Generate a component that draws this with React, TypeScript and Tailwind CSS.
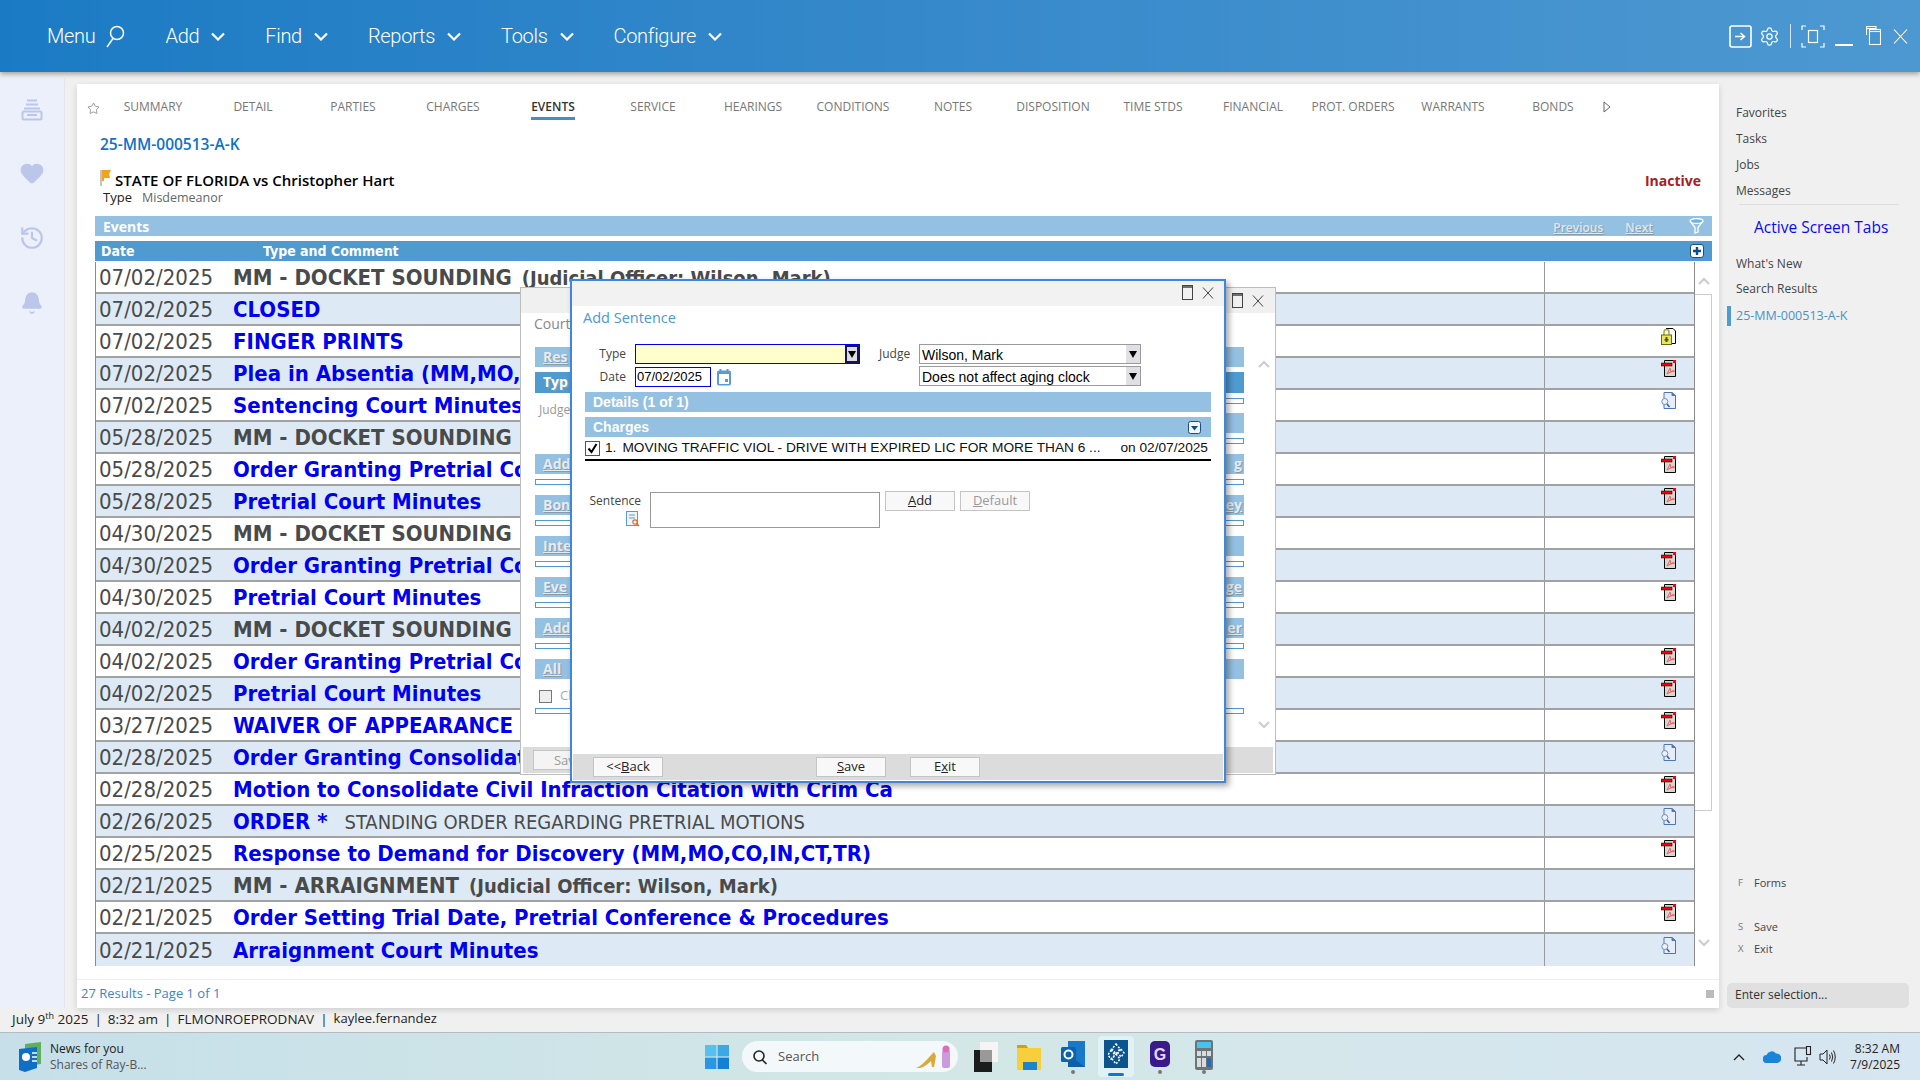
import React from "react";
import { Settings, Star, Heart, History, Bell } from "lucide-react";

type Icon = "pdf" | "lock" | "find" | null;
type Row = { d: string; t: string; blue: boolean; extra?: string; extraBold?: boolean; icon: Icon };

const rows: Row[] = [
  { d: "07/02/2025", t: "MM - DOCKET SOUNDING", blue: false, extra: "(Judicial Officer: Wilson, Mark)", extraBold: true, icon: null },
  { d: "07/02/2025", t: "CLOSED", blue: true, icon: null },
  { d: "07/02/2025", t: "FINGER PRINTS", blue: true, icon: "lock" },
  { d: "07/02/2025", t: "Plea in Absentia (MM,MO,CO,IN,CT,TR)", blue: true, icon: "pdf" },
  { d: "07/02/2025", t: "Sentencing Court Minutes", blue: true, icon: "find" },
  { d: "05/28/2025", t: "MM - DOCKET SOUNDING", blue: false, icon: null },
  { d: "05/28/2025", t: "Order Granting Pretrial Continuance", blue: true, icon: "pdf" },
  { d: "05/28/2025", t: "Pretrial Court Minutes", blue: true, icon: "pdf" },
  { d: "04/30/2025", t: "MM - DOCKET SOUNDING", blue: false, icon: null },
  { d: "04/30/2025", t: "Order Granting Pretrial Continuance", blue: true, icon: "pdf" },
  { d: "04/30/2025", t: "Pretrial Court Minutes", blue: true, icon: "pdf" },
  { d: "04/02/2025", t: "MM - DOCKET SOUNDING", blue: false, icon: null },
  { d: "04/02/2025", t: "Order Granting Pretrial Continuance", blue: true, icon: "pdf" },
  { d: "04/02/2025", t: "Pretrial Court Minutes", blue: true, icon: "pdf" },
  { d: "03/27/2025", t: "WAIVER OF APPEARANCE", blue: true, icon: "pdf" },
  { d: "02/28/2025", t: "Order Granting Consolidation", blue: true, icon: "find" },
  { d: "02/28/2025", t: "Motion to Consolidate Civil Infraction Citation with Crim Ca", blue: true, icon: "pdf" },
  { d: "02/26/2025", t: "ORDER *", blue: true, extra: "STANDING ORDER REGARDING PRETRIAL MOTIONS", icon: "find" },
  { d: "02/25/2025", t: "Response to Demand for Discovery (MM,MO,CO,IN,CT,TR)", blue: true, icon: "pdf" },
  { d: "02/21/2025", t: "MM - ARRAIGNMENT", blue: false, extra: "(Judicial Officer: Wilson, Mark)", extraBold: true, icon: null },
  { d: "02/21/2025", t: "Order Setting Trial Date, Pretrial Conference & Procedures", blue: true, icon: "pdf" },
  { d: "02/21/2025", t: "Arraignment Court Minutes", blue: true, icon: "find" },
];

const tabs = ["SUMMARY", "DETAIL", "PARTIES", "CHARGES", "EVENTS", "SERVICE", "HEARINGS", "CONDITIONS", "NOTES", "DISPOSITION", "TIME STDS", "FINANCIAL", "PROT. ORDERS", "WARRANTS", "BONDS"];

function Chev() {
  return (
    <svg width="14" height="9" viewBox="0 0 14 9" fill="none" stroke="#fff" strokeWidth="2.2">
      <path d="M1 1.5 L7 7.5 L13 1.5" />
    </svg>
  );
}

function NavItem({ label }: { label: string }) {
  return (
    <div className="flex items-center gap-[12px]">
      <span>{label}</span>
      <Chev />
    </div>
  );
}

function PdfIcon() {
  return (
    <svg width="15" height="17" viewBox="0 0 15 17" fill="none">
      <path d="M3.5 0.5 H14.5 V16.5 H3.5 Z" fill="#d9d4d4" stroke="#000" />
      <rect x="12" y="0" width="3" height="3" fill="#f00" />
      <rect x="0" y="3" width="11" height="3" fill="#f00" stroke="#000" strokeWidth="0.5" />
      <path d="M6 14 L9 8 L10 12 L14 11 M6 14 L13 10" stroke="#f0605a" strokeWidth="1" />
    </svg>
  );
}

function LockIcon() {
  return (
    <svg width="15" height="17" viewBox="0 0 15 17" fill="none">
      <path d="M5 0.5 H12 L14.5 3 V15.5 H10" fill="#fff" stroke="#000" />
      <path d="M3 7 V4 A2.5 2.5 0 0 1 8 4 V7" stroke="#a8a830" strokeWidth="1.5" />
      <rect x="0.5" y="7" width="10" height="9.5" fill="#e8e860" stroke="#6a6a10" />
      <rect x="4.5" y="9" width="2" height="5" fill="#55550a" />
      <rect x="3.5" y="11" width="4" height="1.5" fill="#55550a" />
    </svg>
  );
}

function FindIcon() {
  return (
    <svg width="15" height="17" viewBox="0 0 15 17" fill="none">
      <path d="M3 0.5 H11 L14.5 3.5 V16.5 H3 Z" fill="#e6ecf8" stroke="#4f76b4" />
      <path d="M11 0.5 V3.5 H14.5" fill="#4f76b4" stroke="#4f76b4" />
      <circle cx="3.8" cy="9.5" r="3" fill="#eef3fb" stroke="#6f8fc0" />
      <path d="M6 12 L8.5 15" stroke="#38609c" strokeWidth="1.5" />
    </svg>
  );
}

function DocIcon({ kind }: { kind: Icon }) {
  if (kind === "pdf") return <PdfIcon />;
  if (kind === "lock") return <LockIcon />;
  if (kind === "find") return <FindIcon />;
  return null;
}

function RestoreMini() {
  return (
    <svg width="11" height="15" viewBox="0 0 11 15" fill="none" stroke="#444">
      <rect x="0.5" y="0.5" width="10" height="14" />
      <path d="M0.5 2 H10.5" strokeWidth="1.5" />
    </svg>
  );
}

function CloseMini() {
  return (
    <svg width="12" height="12" viewBox="0 0 12 12" fill="none" stroke="#444">
      <path d="M1 0.5 L11 11.5 M11 0.5 L1 11.5" />
    </svg>
  );
}

function SelectArrow({ dark }: { dark?: boolean }) {
  return (
    <div className={dark ? "w-[14px] h-full bg-[#dcdce0] border-2 border-[#14145a] flex items-center justify-center" : "w-[14px] h-full bg-[#e0e0e4] flex items-center justify-center"}>
      <svg width="8" height="9" viewBox="0 0 8 9"><path d="M0 1 H8 L4 8 Z" fill="#000" /></svg>
    </div>
  );
}

function Band({ label, side, dark }: { label?: string; side: "l" | "r"; dark?: boolean }) {
  return (
    <div className={(dark ? "h-[21px] bg-[#4f9acf] text-white " : "h-[20px] bg-[#94c0e2] text-[#e4ecf2] underline ") + (side === "l" ? "pl-[8px] text-left " : "pr-[2px] text-right ") + "shrink-0 mb-[5px] text-[14px] font-bold leading-[20px] [text-shadow:1px_1px_0_#8a9aa8]"}>
      {label}
    </div>
  );
}

function Thin() {
  return <div className="shrink-0 h-[6px] border border-[#4f9acf] bg-white mb-[10px]" />;
}

function BackColumn({ side }: { side: "l" | "r" }) {
  const l = side === "l";
  return (
    <div className="flex-1 flex flex-col">
      <Band side={side} label={l ? "Res" : ""} />
      <Band side={side} label={l ? "Typ" : ""} dark />
      {l ? (
        <div className="h-[56px] shrink-0 pt-[3px] pl-[4px] text-[12px] text-[#999]">Judge</div>
      ) : (
        <>
          <Thin />
          <div className="-mt-[1px]"><Band side={side} /></div>
          <Thin />
        </>
      )}
      <Band side={side} label={l ? "Add" : "g"} />
      <Thin />
      <Band side={side} label={l ? "Bon" : "ey"} />
      <Thin />
      <Band side={side} label={l ? "Inter" : ""} />
      <Thin />
      <Band side={side} label={l ? "Eve" : "rge"} />
      <Thin />
      <Band side={side} label={l ? "Add" : "er"} />
      <Thin />
      <Band side={side} label={l ? "All" : ""} />
      <div className="h-[24px] shrink-0 flex items-center gap-[8px] pl-[4px] text-[13px] text-[#aaa]">
        {l && <div className="w-[13px] h-[13px] border border-[#777] bg-[#eee] shrink-0" />}
        {l && <span>Close</span>}
      </div>
      <Thin />
    </div>
  );
}

function Btn({ children, dim }: { children: React.ReactNode; dim?: boolean }) {
  return (
    <div className={(dim ? "text-[#999] " : "text-[#222] ") + "w-[70px] h-[20px] bg-[#f8f8f8] border border-[#c4c4c4] flex items-center justify-center text-[13px]"}>
      {children}
    </div>
  );
}

export default function App() {
  return (
    <div className="relative w-[1920px] h-[1080px] overflow-hidden flex flex-col bg-[#f0f0f0] font-['Open_Sans',sans-serif]">
      {/* Top bar */}
      <header className="h-[72px] shrink-0 flex items-center justify-between bg-gradient-to-r from-[#1a7bc4] to-[#4d98d1] text-white shadow-[0_2px_5px_rgba(0,0,0,0.35)] z-10">
        <nav className="flex items-center gap-[40px] pl-[47px] text-[20px] tracking-[-0.3px] font-['Roboto',sans-serif] font-light">
          <div className="flex items-center gap-[10px]">
            <span>Menu</span>
            <svg width="20" height="24" viewBox="0 0 20 24" fill="none" stroke="#fff" strokeWidth="1.5">
              <circle cx="12" cy="9" r="6.5" />
              <path d="M8 14.5 L2 23" />
            </svg>
          </div>
          <NavItem label="Add" />
          <NavItem label="Find" />
          <NavItem label="Reports" />
          <NavItem label="Tools" />
          <NavItem label="Configure" />
        </nav>
        <div className="flex items-center pr-[12px]">
          <svg width="23" height="23" viewBox="0 0 23 23" fill="none" stroke="#fff" strokeWidth="1.6">
            <rect x="1" y="1" width="21" height="21" rx="2" />
            <path d="M6 11.5 H15 M11.5 8 L15.5 11.5 L11.5 15" />
          </svg>
          <Settings size={21} strokeWidth={1.4} className="ml-[7px]" />
          <div className="w-px h-[24px] bg-[#d6e6f4] ml-[10px]" />
          <svg className="ml-[10px]" width="24" height="23" viewBox="0 0 24 23" fill="none" stroke="#fff" strokeWidth="1.2">
            <path d="M1 5 V1 H5 M19 1 H23 V5 M23 18 V22 H19 M5 22 H1 V18" />
            <rect x="7.5" y="5.5" width="9" height="12" />
          </svg>
          <div className="w-[18px] h-[2px] bg-white ml-[10px] mt-[17px]" />
          <svg className="ml-[13px] -mt-[2px]" width="15" height="19" viewBox="0 0 15 19" fill="none" stroke="#fff" strokeWidth="1.1">
            <path d="M0.5 9 V0.5 H10 V3" />
            <path d="M0.5 2.5 H10" />
            <rect x="3.5" y="3.5" width="11" height="15" fill="#4894cf" />
            <path d="M3.5 5.5 H14.5" />
          </svg>
          <svg className="ml-[12px]" width="15" height="15" viewBox="0 0 15 15" fill="none" stroke="#fff" strokeWidth="1.1">
            <path d="M1 0.5 L14 14.5 M14 0.5 L1 14.5" />
          </svg>
        </div>
      </header>

      {/* Middle */}
      <div className="h-[936px] shrink-0 flex">
        <aside className="w-[65px] h-[930px] mt-[6px] bg-[#ecf0fa] border-r border-[#e4e6ee] flex flex-col items-center text-[#bcc6ea]">
          <svg className="mt-[21px]" width="22" height="22" viewBox="0 0 22 22" fill="none" stroke="#bcc6ea" strokeWidth="2">
            <path d="M6 1.5 H16 M5 5.5 H17 M3 9.5 H19" />
            <rect x="1.5" y="12.5" width="19" height="8" rx="1.5" />
            <path d="M6 16 H16" />
          </svg>
          <Heart size={26} fill="#bcc6ea" strokeWidth={1} className="mt-[39px]" />
          <History size={26} strokeWidth={2} className="mt-[39px]" />
          <Bell size={24} fill="#bcc6ea" strokeWidth={1.5} className="mt-[40px]" />
        </aside>

        <main className="w-[1642px] h-[924px] mt-[12px] ml-[12px] bg-white shadow-[0_2px_6px_rgba(0,0,0,0.15)] flex flex-col">
          <div className="h-[38px] shrink-0 flex items-start pt-[14px] text-[12px] text-[#777]">
            <Star size={13} strokeWidth={1.2} className="ml-[10px] mr-[3px] mt-[4px] text-[#666]" />
            {tabs.map((t) => (
              <div key={t} className="w-[100px] shrink-0 flex justify-center">
                <span className={t === "EVENTS" ? "pb-[1px] border-b-[3px] border-[#3f8fd0] font-semibold text-[#333]" : ""}>{t}</span>
              </div>
            ))}
            <svg className="mt-[3px]" width="8" height="12" viewBox="0 0 8 12" fill="none" stroke="#666"><path d="M1 1 L7 6 L1 11 Z" /></svg>
          </div>

          <div className="h-[20px] mt-[12px] pl-[23px] text-[15.5px] leading-[20px] font-semibold text-[#0d72c8]">25-MM-000513-A-K</div>

          <div className="h-[18px] mt-[17px] mb-[1px] pl-[23px] flex items-center text-[15px] font-semibold text-black">
            <svg className="-mt-[5px] mr-[2px] shrink-0" width="13" height="16" viewBox="0 0 13 16">
              <path d="M1 0 V16" stroke="#888" strokeWidth="1" />
              <path d="M2 0 H11 L9 4 L10 8 H4 V11 H2 Z" fill="#f4a11e" />
            </svg>
            STATE OF FLORIDA vs Christopher Hart
            <span className="ml-auto mr-[18px] text-[14px] font-bold text-[#a52024]">Inactive</span>
          </div>
          <div className="h-[16px] pl-[26px] flex items-center text-[13px]">
            <span className="text-[#222] w-[39px]">Type</span>
            <span className="text-[#666] text-[12.5px]">Misdemeanor</span>
          </div>

          <div className="w-[1617px] h-[20px] mt-[10px] ml-[18px] bg-[#94c0e2] flex items-center text-[14px] font-bold text-white pl-[8px] shrink-0">
            Events
            <span className="ml-auto text-[12px] mt-[3px] underline font-semibold text-[#dfe8ef] [text-shadow:1px_1px_0_#8a9aa8]">Previous</span>
            <span className="ml-[22px] text-[12px] mt-[3px] underline font-semibold text-[#dfe8ef] [text-shadow:1px_1px_0_#8a9aa8]">Next</span>
            <svg className="ml-[36px] mr-[8px]" width="15" height="16" viewBox="0 0 15 16" fill="none" stroke="#fff" strokeWidth="1.3">
              <ellipse cx="7.5" cy="3" rx="6.5" ry="2.4" fill="#6fb0e6" />
              <path d="M1 3 L6 9.5 V15 L9 14 V9.5 L14 3" />
            </svg>
          </div>

          <div className="w-[1617px] h-[20px] mt-[5px] ml-[18px] bg-[#4f9acf] flex items-center text-[14px] font-bold text-white font-['DejaVu_Sans_Condensed','DejaVu_Sans',sans-serif] shrink-0">
            <span className="pl-[6px] w-[168px]">Date</span>
            <span>Type and Comment</span>
            <svg className="ml-auto mr-[8px]" width="14" height="14" viewBox="0 0 14 14">
              <rect x="0.5" y="0.5" width="13" height="13" rx="2.5" fill="#fff" stroke="#1b4f80" />
              <path d="M3 7 H11 M7 3 V11" stroke="#0e4c86" strokeWidth="2.4" />
            </svg>
          </div>

          <div className="flex mt-[1px] ml-[18px] w-[1617px]">
            <div className="w-[1600px] border-l border-[#8c8c8c] border-r">
              {rows.map((r, i) => (
                <div key={i} className={(i % 2 ? "bg-[#ddeaf5] " : "bg-white ") + (i === rows.length - 1 ? "" : "border-b-2 border-[#a2a2a2] ") + "h-[32px] pt-[2px] flex items-center overflow-hidden font-['DejaVu_Sans_Condensed','DejaVu_Sans',sans-serif] text-[22px] leading-[30px]"}>
                  <span className="w-[137px] pl-[3px] shrink-0 text-[#4a4a4a]">{r.d}</span>
                  <span className={(r.extraBold ? "gap-[10px] " : "gap-[17px] ") + "w-[1311px] shrink-0 flex items-center whitespace-nowrap"}>
                    <span className={(r.blue ? "text-[#0000f0]" : "text-[#4a4a4a]") + " font-bold"}>{r.t}</span>
                    {r.extra && (
                      <span className={(r.extraBold ? "font-bold text-[20px] " : "text-[20px] ") + "text-[#4a4a4a]"}>{r.extra}</span>
                    )}
                  </span>
                  <span className="flex-1 h-[36px] border-l border-[#9a9a9a] pl-[116px] pt-[4px]">
                    <DocIcon kind={r.icon} />
                  </span>
                </div>
              ))}
            </div>
            <div className="w-[17px] flex flex-col items-center">
              <div className="h-[32px] pt-[15px]">
                <svg width="12" height="8" viewBox="0 0 12 8" fill="none" stroke="#ccc" strokeWidth="2"><path d="M1 7 L6 2 L11 7" /></svg>
              </div>
              <div className="w-[17px] h-[517px] border border-l-0 border-[#ccc]" />
              <div className="mt-[128px]">
                <svg width="12" height="8" viewBox="0 0 12 8" fill="none" stroke="#ccc" strokeWidth="2"><path d="M1 1 L6 6 L11 1" /></svg>
              </div>
            </div>
          </div>

          <div className="mt-auto h-[29px] border-t border-[#eee] flex items-center pl-[4px] pr-[5px] text-[13px] text-[#3f83c4]">
            27 Results - Page 1 of 1
            <div className="ml-auto w-[8px] h-[8px] bg-[#bbb]" />
          </div>
        </main>

        <aside className="w-[201px] flex flex-col text-[12px] text-[#444] pl-[17px] pt-[32px]">
          <div className="h-[26px] leading-[18px]">Favorites</div>
          <div className="h-[26px] leading-[18px]">Tasks</div>
          <div className="h-[26px] leading-[18px]">Jobs</div>
          <div className="h-[18px] leading-[18px]">Messages</div>
          <div className="w-[160px] h-[1px] bg-[#ddd] ml-[3px] mt-[4px]" />
          <div className="text-[15.5px] text-[#0a0af0] pl-[18px] h-[46px] pt-[10px] leading-[24px]">Active Screen Tabs</div>
          <div className="h-[26px] leading-[18px] mt-[4px]">What's New</div>
          <div className="h-[26px] leading-[18px]">Search Results</div>
          <div className="h-[20px] flex items-center -ml-[9px] text-[12.5px] text-[#4a90c8]">
            <div className="w-[4px] h-[20px] bg-[#4f9acf] mr-[5px]" />
            25-MM-000513-A-K
          </div>
          <div className="mt-[548px] flex items-center h-[18px] text-[11px]"><span className="w-[16px] ml-[2px] text-[9.5px] text-[#777]">F</span>Forms</div>
          <div className="mt-[26px] flex items-center h-[18px] text-[11px]"><span className="w-[16px] ml-[2px] text-[9.5px] text-[#777]">S</span>Save</div>
          <div className="mt-[4px] flex items-center h-[18px] text-[11px]"><span className="w-[16px] ml-[2px] text-[9.5px] text-[#777]">X</span>Exit</div>
          <div className="mt-[25px] -ml-[9px] w-[182px] h-[25px] rounded-[5px] bg-[#e0e0e0] flex items-center pl-[8px] pb-[1px] text-[12px] text-[#333]">Enter selection...</div>
        </aside>
      </div>

      {/* Status */}
      <div className="h-[24px] shrink-0 pl-[12px] pb-[2px] flex items-center gap-[6px] text-[13.5px] text-[#222]">
        <span>July 9<sup className="text-[9px]">th</sup> 2025</span><span>|</span>
        <span>8:32 am</span><span>|</span>
        <span>FLMONROEPRODNAV</span><span>|</span>
        <span className="text-[13px]">kaylee.fernandez</span>
      </div>

      {/* Taskbar */}
      <footer className="h-[48px] shrink-0 border-t border-[#b4bcc2] bg-gradient-to-r from-[#c6dfe9] via-[#d3e7e6] to-[#d6e6f2] flex items-center text-[#222]">
        <svg className="ml-[17px]" width="26" height="30" viewBox="0 0 26 30">
          <path d="M8 2 L24 0 V22 L8 24 Z" fill="#5fb058" />
          <path d="M2 7 L20 5 V26 L8 30 L2 28 Z" fill="#0f6fc6" />
          <circle cx="9" cy="15" r="4" fill="#fff" />
          <path d="M15 11 H20 M15 15 H20 M15 19 H20" stroke="#fff" strokeWidth="1.5" />
        </svg>
        <div className="ml-[7px] w-[120px] flex flex-col">
          <span className="text-[12px] leading-[16px]">News for you</span>
          <span className="text-[12px] leading-[16px] text-[#555]">Shares of Ray-B...</span>
        </div>
        <svg className="ml-[535px]" width="24" height="24" viewBox="0 0 24 24">
          <rect x="0" y="0" width="11.4" height="11.4" fill="#58c0f0" />
          <rect x="12.6" y="0" width="11.4" height="11.4" fill="#3ba8e8" />
          <rect x="0" y="12.6" width="11.4" height="11.4" fill="#2a98e0" />
          <rect x="12.6" y="12.6" width="11.4" height="11.4" fill="#1280d4" />
        </svg>
        <div className="ml-[13px] w-[216px] h-[31px] rounded-full bg-[#f3f8fa] flex items-center pl-[10px] text-[13px] text-[#555]">
          <svg width="16" height="16" viewBox="0 0 16 16" fill="none" stroke="#222" strokeWidth="1.6">
            <circle cx="7" cy="7" r="5" />
            <path d="M10.5 11 L14.5 15" />
          </svg>
          <span className="ml-[10px]">Search</span>
          <svg className="ml-auto mr-[6px]" width="38" height="26" viewBox="0 0 38 26">
            <path d="M2 24 C8 22 14 14 20 8 L22 12 L20 23 H18 L17 17 C14 20 10 23 6 24 Z" fill="#d9a93c" />
            <rect x="28" y="6" width="8" height="18" rx="2" fill="#c99ae0" />
            <circle cx="32" cy="5" r="3.5" fill="#d86fb8" />
          </svg>
        </div>
        <svg className="ml-[15px]" width="26" height="30" viewBox="0 0 26 30">
          <rect x="7" y="0" width="18" height="20" fill="#f5f5f5" />
          <rect x="1" y="8" width="18" height="22" fill="#1c1c1c" />
          <rect x="7" y="8" width="12" height="12" fill="#999" />
        </svg>
        <svg className="ml-[17px]" width="26" height="28" viewBox="0 0 26 28">
          <path d="M1 2 H10 L12 5 H25 V27 H1 Z" fill="#f6cf3a" />
          <path d="M1 2 H10 L12 5 H1 Z" fill="#d99a14" />
          <rect x="7" y="19" width="14" height="8" fill="#1c84cc" />
        </svg>
        <div className="ml-[18px] relative w-[26px] h-[34px]">
          <svg width="26" height="28" viewBox="0 0 26 28">
            <rect x="8" y="1" width="17" height="26" fill="#1a78c8" />
            <path d="M8 14 L25 27 H8 Z" fill="#0f5ea8" />
            <rect x="1" y="7" width="15" height="15" rx="1.5" fill="#0a63b0" />
            <circle cx="8.5" cy="14.5" r="4" fill="none" stroke="#fff" strokeWidth="2" />
          </svg>
          <div className="absolute left-[11px] bottom-0 w-[4px] h-[4px] rounded-full bg-[#777]" />
        </div>
        <div className="ml-[11px] w-[38px] h-[43px] rounded-[4px] bg-[#e2f2f4] border border-[#cfe6ea] flex flex-col items-center pt-[4px] relative">
          <svg width="24" height="28" viewBox="0 0 24 28">
            <rect width="24" height="28" fill="#0a5590" />
            <path d="M12 4 L16 9 L12 14 L8 9 Z M12 14 L16 19 L12 24 L8 19 Z M7 10 L11 15 L7 19 L4 15 Z M17 9 L20 13 L17 17 L14 13 Z" fill="none" stroke="#fff" strokeWidth="1.5" strokeDasharray="2 1.5" />
          </svg>
          <div className="absolute bottom-[1px] w-[16px] h-[3px] rounded bg-[#0a78d4]" />
        </div>
        <div className="ml-[14px] relative w-[22px] h-[34px] flex justify-center">
          <svg width="22" height="28" viewBox="0 0 22 28">
            <rect x="1" y="1" width="20" height="26" rx="5" fill="#3a1a8a" />
            <text x="11" y="20" textAnchor="middle" fontSize="16" fontWeight="700" fill="#e8d8ff" fontFamily="Liberation Sans">G</text>
          </svg>
          <div className="absolute left-[9px] bottom-0 w-[4px] h-[4px] rounded-full bg-[#777]" />
        </div>
        <div className="ml-[24px] relative w-[18px] h-[34px] flex justify-center">
          <svg width="18" height="30" viewBox="0 0 18 30">
            <rect width="18" height="30" rx="2" fill="#6e7378" />
            <rect x="2" y="2" width="14" height="6" fill="#45c4ee" />
            <rect x="2" y="11" width="4" height="5" fill="#d8dcdf" />
            <rect x="7" y="11" width="4" height="5" fill="#d8dcdf" />
            <rect x="12" y="11" width="4" height="5" fill="#d8dcdf" />
            <rect x="2" y="18" width="4" height="9" fill="#d8dcdf" />
            <rect x="7" y="18" width="4" height="9" fill="#d8dcdf" />
            <rect x="12" y="18" width="4" height="9" fill="#2c68b0" />
          </svg>
          <div className="absolute left-[7px] bottom-0 w-[4px] h-[4px] rounded-full bg-[#777]" />
        </div>
        <svg className="ml-[520px]" width="12" height="8" viewBox="0 0 12 8" fill="none" stroke="#222" strokeWidth="1.4"><path d="M1 7 L6 2 L11 7" /></svg>
        <svg className="ml-[18px]" width="18" height="13" viewBox="0 0 18 13"><path d="M4 13 A4 4 0 0 1 3.5 5 A5.5 5.5 0 0 1 13 3.5 A4.5 4.5 0 0 1 14 13 Z" fill="#1a84d8" /></svg>
        <svg className="ml-[13px]" width="20" height="22" viewBox="0 0 20 22" fill="none" stroke="#222" strokeWidth="1.1">
          <path d="M12 2 H1 V15 H13 V11" />
          <path d="M7 15 V19 M3 19 H11" />
          <rect x="12.5" y="0.5" width="4" height="8" />
        </svg>
        <svg className="ml-[5px]" width="18" height="18" viewBox="0 0 18 18" fill="none" stroke="#222" strokeWidth="1">
          <path d="M1 6 H4 L8 2 V16 L4 12 H1 Z M10.5 6.5 Q12 9 10.5 11.5 M12.5 4.5 Q15 9 12.5 13.5 M14.5 2.5 Q18 9 14.5 15.5" />
        </svg>
        <div className="ml-[11px] w-[52px] flex flex-col items-end text-[12px] leading-[16px] text-[#222]">
          <span>8:32 AM</span>
          <span>7/9/2025</span>
        </div>
      </footer>

      {/* Back dialog */}
      <div className="absolute left-[520px] top-[287px] w-[756px] h-[488px] bg-white border border-[#bdbdbd] flex flex-col">
        <div className="h-[25px] bg-[#f0f0f0] flex items-center justify-end gap-[9px] pr-[11px] shrink-0">
          <RestoreMini />
          <CloseMini />
        </div>
        <div className="pl-[13px] h-[34px] text-[14px] text-[#888] shrink-0">Court</div>
        <div className="flex pl-[14px] pr-[31px] gap-[20px] h-[380px] shrink-0">
          <BackColumn side="l" />
          <BackColumn side="r" />
        </div>
        <div className="absolute right-[5px] top-[72px]"><svg width="12" height="8" viewBox="0 0 12 8" fill="none" stroke="#ccc" strokeWidth="2"><path d="M1 7 L6 2 L11 7" /></svg></div>
        <div className="absolute right-[5px] top-[433px]"><svg width="12" height="8" viewBox="0 0 12 8" fill="none" stroke="#ccc" strokeWidth="2"><path d="M1 1 L6 6 L11 1" /></svg></div>
        <div className="mt-auto h-[26px] mb-[1px] mx-[2px] bg-[#dcdcdc] flex items-center pl-[10px]">
          <div className="w-[70px] h-[20px] border border-[#c4c4c4] bg-[#f4f4f4] text-[#999] text-[13px] text-center">Save</div>
        </div>
      </div>

      {/* Front dialog */}
      <div className="absolute left-[570px] top-[279px] w-[656px] h-[504px] bg-white border-2 border-[#3f86de] shadow-[3px_3px_6px_rgba(0,0,0,0.35)] flex flex-col font-['Liberation_Sans',sans-serif]">
        <div className="h-[25px] bg-[#f2f2f2] flex items-center justify-end gap-[9px] pr-[10px] pb-[2px] shrink-0">
          <RestoreMini />
          <CloseMini />
        </div>
        <div className="pl-[11px] h-[28px] text-[14.5px] leading-[23px] text-[#4a9ad4] font-['Open_Sans',sans-serif] shrink-0">Add Sentence</div>
        <div className="flex pl-[12px] h-[45px] shrink-0 mt-[10px]">
          <div className="w-[42px] flex flex-col items-end text-[12px] text-[#444] font-['Open_Sans',sans-serif] leading-[20px] gap-[3px]">
            <span>Type</span>
            <span>Date</span>
          </div>
          <div className="ml-[9px] w-[225px] flex flex-col gap-[3px]">
            <div className="h-[20px] w-[225px] flex border border-[#0000ee] bg-[#ffffcc] justify-end">
              <SelectArrow dark />
            </div>
            <div className="flex items-center gap-[6px]">
              <div className="w-[76px] h-[20px] border border-[#0000ee] pl-[1px] text-[13px] leading-[18px] text-black">07/02/2025</div>
              <svg width="14" height="17" viewBox="0 0 14 17">
                <rect x="0" y="1.5" width="14" height="15" rx="2" fill="#5b9bd5" />
                <rect x="2" y="5" width="10" height="10" fill="#fff" />
                <rect x="8" y="10" width="3" height="3" fill="#5b9bd5" />
                <rect x="2.5" y="0" width="2" height="3" fill="#5b9bd5" />
                <rect x="9.5" y="0" width="2" height="3" fill="#5b9bd5" />
              </svg>
            </div>
          </div>
          <div className="ml-[19px] w-[40px] text-[12px] text-[#444] font-['Open_Sans',sans-serif] leading-[20px]">Judge</div>
          <div className="w-[222px] flex flex-col gap-[2px]">
            <div className="h-[20px] flex border border-[#9a9a9a] justify-between text-[14px] leading-[20px] pl-[2px] text-black"><span>Wilson, Mark</span><SelectArrow /></div>
            <div className="h-[20px] flex border border-[#9a9a9a] justify-between text-[14px] leading-[20px] pl-[2px] text-black"><span>Does not affect aging clock</span><SelectArrow /></div>
          </div>
        </div>
        <div className="ml-[13px] mt-[3px] w-[626px] h-[20px] bg-[#94c0e2] text-white font-bold text-[14px] leading-[20px] pl-[8px] shrink-0">Details (1 of 1)</div>
        <div className="ml-[13px] mt-[5px] w-[626px] h-[20px] bg-[#94c0e2] text-white font-bold text-[14px] leading-[20px] pl-[8px] shrink-0 flex items-center justify-between pr-[10px]">
          Charges
          <svg width="13" height="13" viewBox="0 0 13 13">
            <rect x="0.5" y="0.5" width="12" height="12" rx="2" fill="#f2f6fa" stroke="#1b4f80" />
            <path d="M3 5 H10 L6.5 9.5 Z" fill="#0e4c86" />
          </svg>
        </div>
        <div className="ml-[13px] mt-[5px] w-[626px] h-[19px] flex items-center border-b-2 border-black text-[13.7px] text-[#111] whitespace-nowrap pb-[4px] shrink-0">
          <div className="w-[15px] h-[15px] border border-[#555] flex items-center justify-center shrink-0">
            <svg width="11" height="11" viewBox="0 0 11 11" fill="none" stroke="#000" strokeWidth="2"><path d="M1.5 5.5 L4.5 9 L9.5 1" /></svg>
          </div>
          <span className="ml-[5px]">1.</span>
          <span className="ml-[6px]">MOVING TRAFFIC VIOL - DRIVE WITH EXPIRED LIC FOR MORE THAN 6 ...</span>
          <span className="ml-auto mr-[3px]">on 02/07/2025</span>
        </div>
        <div className="flex mt-[31px] pl-[17px] shrink-0">
          <div className="w-[61px] flex flex-col items-end pr-[9px] text-[12px] text-[#444] font-['Open_Sans',sans-serif]">
            <span className="leading-[18px]">Sentence</span>
            <svg className="mt-[1px] mr-[1px]" width="14" height="16" viewBox="0 0 14 16" fill="none">
              <rect x="0.5" y="0.5" width="11" height="14" fill="#eef4fb" stroke="#5b9bd5" />
              <path d="M3 4 H9 M3 7 H9" stroke="#5b9bd5" />
              <circle cx="9" cy="11" r="2.2" fill="#fff" stroke="#e8662a" strokeWidth="1.2" />
              <path d="M10.5 12.5 L13 15" stroke="#e8662a" strokeWidth="1.5" />
            </svg>
          </div>
          <div className="w-[230px] h-[36px] border border-[#9a9a9a]" />
          <div className="ml-[5px] -mt-[1px] flex gap-[5px] font-['Open_Sans',sans-serif]">
            <Btn><span className="underline">A</span>dd</Btn>
            <Btn dim><span className="underline">D</span>efault</Btn>
          </div>
        </div>
        <div className="mt-auto mx-[1px] mb-[1px] h-[26px] bg-[#dcdcdc] flex items-center pl-[20px] font-['Open_Sans',sans-serif]">
          <Btn>&lt;&lt;<span className="underline">B</span>ack</Btn>
          <div className="ml-[153px]"><Btn><span className="underline">S</span>ave</Btn></div>
          <div className="ml-[24px]"><Btn>E<span className="underline">x</span>it</Btn></div>
        </div>
      </div>
    </div>
  );
}
